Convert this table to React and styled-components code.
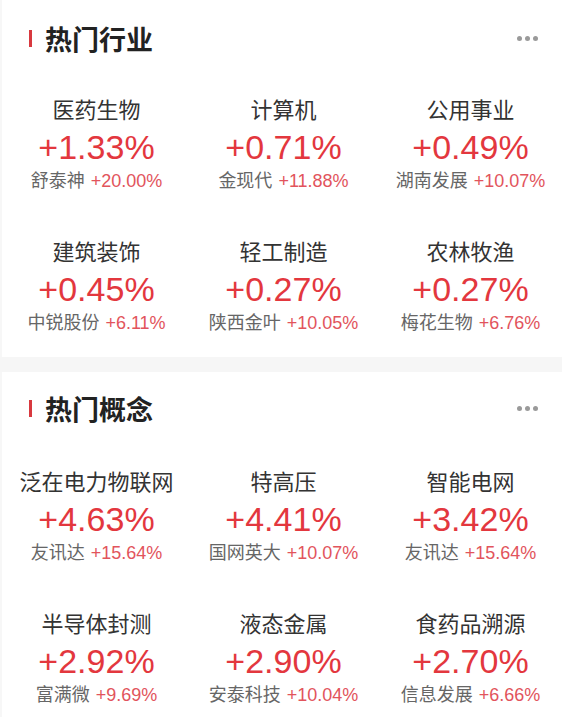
import React from 'react'
import styled, { createGlobalStyle } from 'styled-components';

const sections = [
    {
        title: "热门行业",
        items: [
            { name: "医药生物", pct: "+1.33%", stock: "舒泰神", stockPct: "+20.00%" },
            { name: "计算机", pct: "+0.71%", stock: "金现代", stockPct: "+11.88%" },
            { name: "公用事业", pct: "+0.49%", stock: "湖南发展", stockPct: "+10.07%" },
            { name: "建筑装饰", pct: "+0.45%", stock: "中锐股份", stockPct: "+6.11%" },
            { name: "轻工制造", pct: "+0.27%", stock: "陕西金叶", stockPct: "+10.05%" },
            { name: "农林牧渔", pct: "+0.27%", stock: "梅花生物", stockPct: "+6.76%" },
        ]
    },
    {
        title: "热门概念",
        items: [
            { name: "泛在电力物联网", pct: "+4.63%", stock: "友讯达", stockPct: "+15.64%" },
            { name: "特高压", pct: "+4.41%", stock: "国网英大", stockPct: "+10.07%" },
            { name: "智能电网", pct: "+3.42%", stock: "友讯达", stockPct: "+15.64%" },
            { name: "半导体封测", pct: "+2.92%", stock: "富满微", stockPct: "+9.69%" },
            { name: "液态金属", pct: "+2.90%", stock: "安泰科技", stockPct: "+10.04%" },
            { name: "食药品溯源", pct: "+2.70%", stock: "信息发展", stockPct: "+6.66%" },
        ]
    }
];

function App() {
    return (
        <>
            <GlobalStyle />
            <Page>
                {sections.map((section, i) => (
                    <React.Fragment key={section.title}>
                        {i > 0 && <Divider />}
                        <Card first={i === 0}>
                            <Header>
                                <Title>{section.title}</Title>
                                <More>
                                    <Dot /><Dot /><Dot />
                                </More>
                            </Header>
                            <Grid first={i === 0}>
                                {section.items.map(item => (
                                    <Cell key={item.name}>
                                        <Name>{item.name}</Name>
                                        <Pct>{item.pct}</Pct>
                                        <Sub>
                                            <span>{item.stock}</span>
                                            <SubPct>{item.stockPct}</SubPct>
                                        </Sub>
                                    </Cell>
                                ))}
                            </Grid>
                        </Card>
                    </React.Fragment>
                ))}
            </Page>
        </>
    )
}

export default App;

const GlobalStyle = createGlobalStyle`
    body {
        margin: 0;
        background: #ffffff;
        font-family: "Liberation Sans", "Noto Sans CJK SC", sans-serif;
    }
`

const Page = styled.div`
    width: 562px;
    height: 720px;
    overflow: hidden;
    background: #ffffff;
`

const Card = styled.section`
    background: #ffffff;
    padding: ${props => props.first ? "18px 0 24px" : "16px 0 12px"};
    border-left: 2px solid #f7f7f7;
`

const Divider = styled.div`
    height: 15px;
    background: #f6f6f6;
`

const Header = styled.div`
    display: flex;
    align-items: center;
    justify-content: space-between;
    height: 40px;
    padding: 0 24px 0 27px;
`

const Title = styled.h2`
    display: flex;
    align-items: center;
    gap: 13px;
    margin: 0;
    font-size: 27px;
    font-weight: 700;
    color: #222;
    font-family: "Noto Sans CJK SC", sans-serif;

    &::before {
        content: "";
        width: 3px;
        height: 17px;
        background: #d8393f;
    }
`

const More = styled.div`
    display: flex;
    gap: 3px;
`

const Dot = styled.span`
    width: 5px;
    height: 5px;
    border-radius: 50%;
    background: #9a9a9a;
`

const Grid = styled.div`
    display: grid;
    grid-template-columns: repeat(3, 187px);
    row-gap: 44px;
    padding-left: 1px;
    margin-top: ${props => props.first ? "35px" : "37px"};
`

const Cell = styled.div`
    display: flex;
    flex-direction: column;
    align-items: center;
`

const Name = styled.div`
    font-size: 22px;
    line-height: 30px;
    color: #333;
    font-family: "Noto Sans CJK SC", sans-serif;
`

const Pct = styled.div`
    font-size: 34px;
    line-height: 48px;
    color: #e3373e;
`

const Sub = styled.div`
    display: flex;
    gap: 6px;
    font-size: 18px;
    line-height: 20px;
    color: #666;
`

const SubPct = styled.span`
    color: #e2545c;
`
